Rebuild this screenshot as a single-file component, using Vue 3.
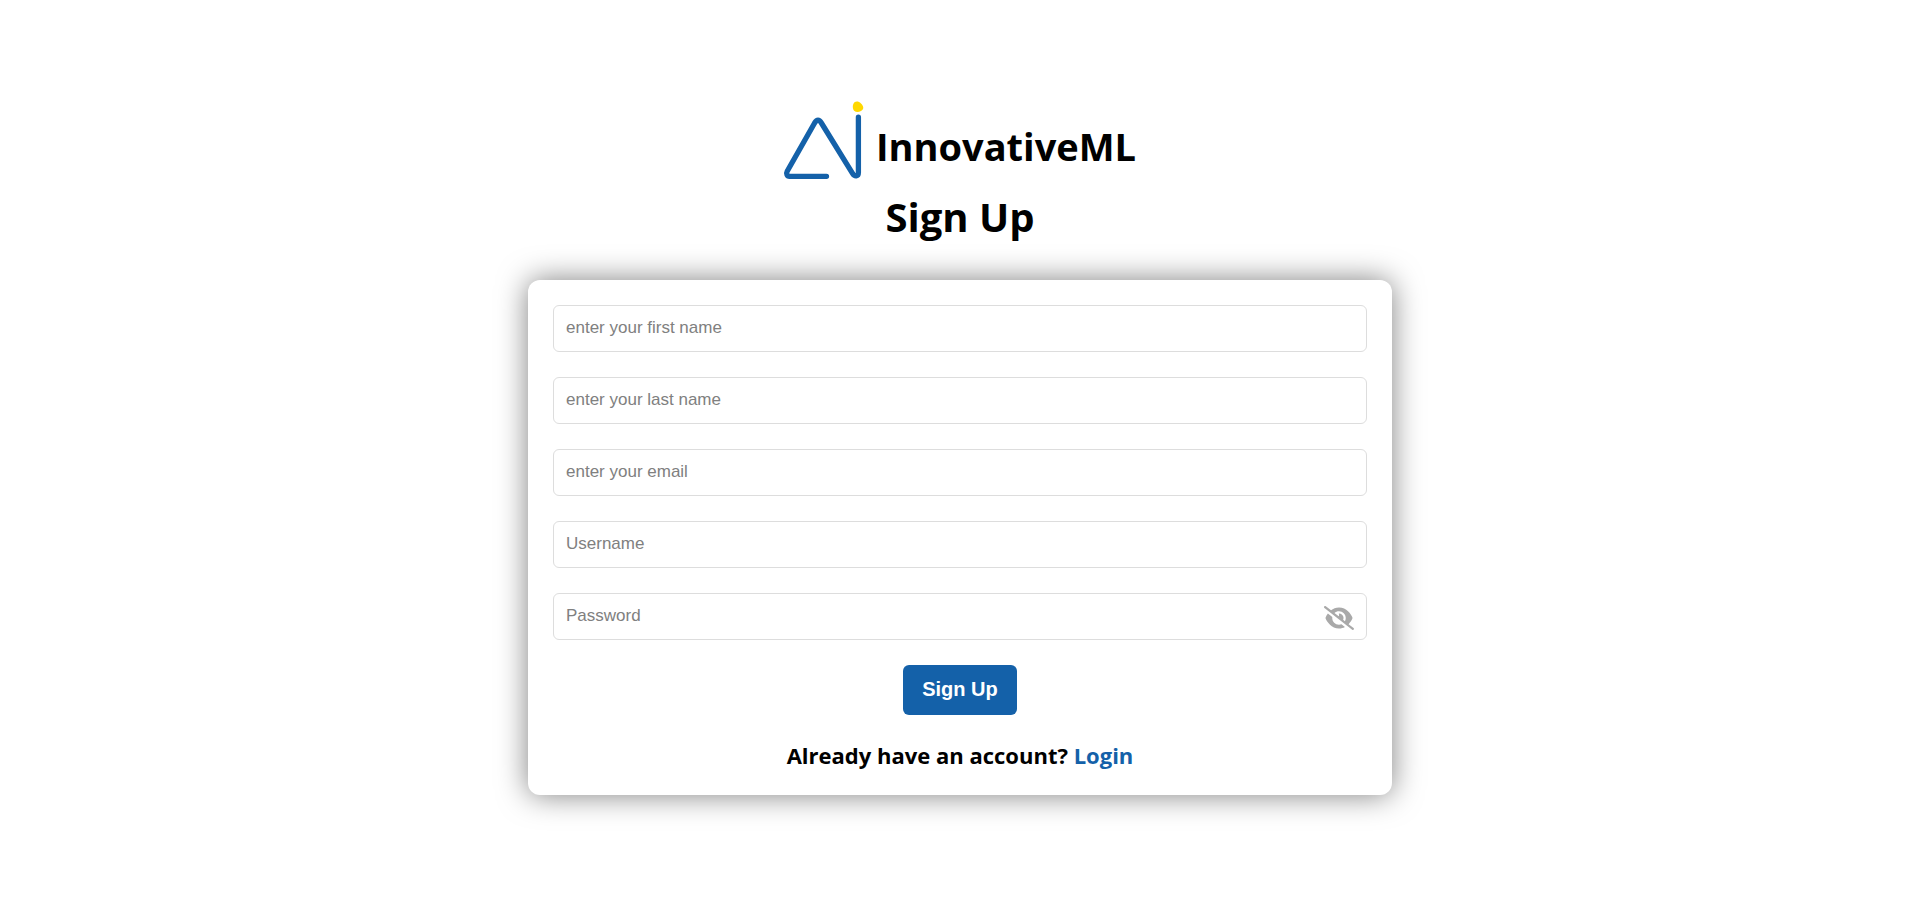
<script setup>
import { ref } from 'vue'

const fields = [
  { id: 'first-name', type: 'text', placeholder: 'enter your first name' },
  { id: 'last-name', type: 'text', placeholder: 'enter your last name' },
  { id: 'email', type: 'email', placeholder: 'enter your email' },
  { id: 'username', type: 'text', placeholder: 'Username' }
]
const showPassword = ref(false)
</script>

<template>
  <main class="page">
    <header class="brand">
      <svg class="logo" viewBox="0 0 80 78" aria-hidden="true">
        <path d="M42.500 75.300H5.500C3 75.300 2 72.500 3.200 70.300L30.600 22Q34 16.500 37.400 22L68.500 72.300C70.800 76 74.400 75.500 74.400 71.500V16.200" fill="none" stroke="#1461a9" stroke-width="5.300" stroke-linecap="round" stroke-linejoin="round" />
        <path d="M69 4C70 0 74 -.5 77 2.500C80 5.500 80 8.500 77 10C73 12 69.500 10.500 69 7.500C68.800 6 68.700 5 69 4Z" fill="#ffd800" />
      </svg>
      <span class="name">InnovativeML</span>
    </header>
    <h1 class="title">Sign Up</h1>
    <form class="card" @submit.prevent>
      <input v-for="f in fields" :key="f.id" :id="f.id" class="field" :type="f.type" :placeholder="f.placeholder" :aria-label="f.placeholder" />
      <div class="password">
        <input id="password" class="field" :type="showPassword ? 'text' : 'password'" placeholder="Password" aria-label="Password" />
        <button class="eye" type="button" aria-label="Toggle password visibility" @click="showPassword = !showPassword">
          <svg viewBox="0 0 640 512" aria-hidden="true">
            <path d="M38.8 5.1C28.4-3.1 13.3-1.2 5.1 9.2S-1.2 34.7 9.200 42.900l592 464c10.400 8.200 25.500 6.300 33.700-4.100s6.300-25.500-4.100-33.700L525.600 386.700c39.600-40.600 66.400-86.100 79.900-118.400c3.300-7.900 3.300-16.700 0-24.600c-14.900-35.700-46.200-87.700-93-131.100C465.500 68.800 400.800 32 320 32c-68.200 0-125 26.300-169.300 60.800L38.800 5.100zM223.100 149.500C248.600 126.200 282.700 112 320 112c79.500 0 144 64.500 144 144c0 24.900-6.300 48.300-17.400 68.700L408 294.500c8.400-19.300 10.600-41.400 4.800-63.300c-11.100-41.500-47.800-69.400-88.600-71.100c-5.800-.2-9.200 6.100-7.400 11.700c2.100 6.400 3.300 13.200 3.300 20.300c0 10.200-2.400 19.800-6.600 28.300l-90.300-70.800zM373 389.900c-16.400 6.500-34.300 10.100-53 10.100c-79.500 0-144-64.500-144-144c0-6.900 .5-13.600 1.400-20.200L83.100 161.500C60.300 191.200 44 220.800 34.500 243.700c-3.300 7.900-3.300 16.700 0 24.600c14.900 35.700 46.200 87.700 93 131.100C174.500 443.200 239.200 480 320 480c47.800 0 89.900-12.900 126.200-32.500L373 389.900z" />
          </svg>
        </button>
      </div>
      <button class="submit" type="submit">Sign Up</button>
      <p class="switch">Already have an account? <a href="#login">Login</a></p>
    </form>
  </main>
</template>

<style>
body {
  margin: 0;
  background: #fff;
}
</style>

<style scoped>
.page {
  box-sizing: border-box;
  display: flex;
  flex-direction: column;
  align-items: center;
  justify-content: center;
  min-height: 100vh;
  padding-bottom: 2px;
  font-family: "Open Sans", "Noto Sans", sans-serif;
  color: #000;
}
.brand {
  display: flex;
  align-items: center;
  gap: 12px;
}
.logo {
  width: 80px;
  height: 78px;
  overflow: visible;
}
.name {
  padding-top: 12px;
  font-size: 38px;
  line-height: 54px;
  font-weight: 700;
}
.title {
  margin: 11px 0 36px;
  font-size: 40px;
  line-height: 54px;
  font-weight: 700;
}
.card {
  box-sizing: border-box;
  display: flex;
  flex-direction: column;
  align-items: center;
  gap: 25px;
  width: 45%;
  padding: 25px;
  border-radius: 12px;
  background: #fff;
  box-shadow: 0 0 30px rgba(0, 0, 0, 0.5);
}
.field {
  box-sizing: border-box;
  display: block;
  width: 100%;
  height: 47px;
  padding: 0 12px 2px;
  border: 1px solid #ddd;
  border-radius: 6px;
  background: #fff;
  font-family: "Liberation Sans", sans-serif;
  font-size: 17px;
}
.field::placeholder {
  color: #808080;
  opacity: 1;
}
.password {
  position: relative;
  width: 100%;
}
.eye {
  position: absolute;
  top: 13px;
  right: 13px;
  padding: 0;
  border: 0;
  background: none;
  cursor: pointer;
}
.eye svg {
  display: block;
  width: 30px;
  height: 24px;
  fill: #a9a9a9;
}
.submit {
  height: 50px;
  padding: 0 19px 2px;
  border: 0;
  border-radius: 6px;
  background: #1461a9;
  color: #fff;
  font-family: "Liberation Sans", sans-serif;
  font-size: 20px;
  font-weight: 700;
  cursor: pointer;
}
.switch {
  margin: 0;
  font-size: 22px;
  line-height: 30px;
  font-weight: 700;
}
.switch a {
  color: #1461a9;
  text-decoration: none;
}
</style>
